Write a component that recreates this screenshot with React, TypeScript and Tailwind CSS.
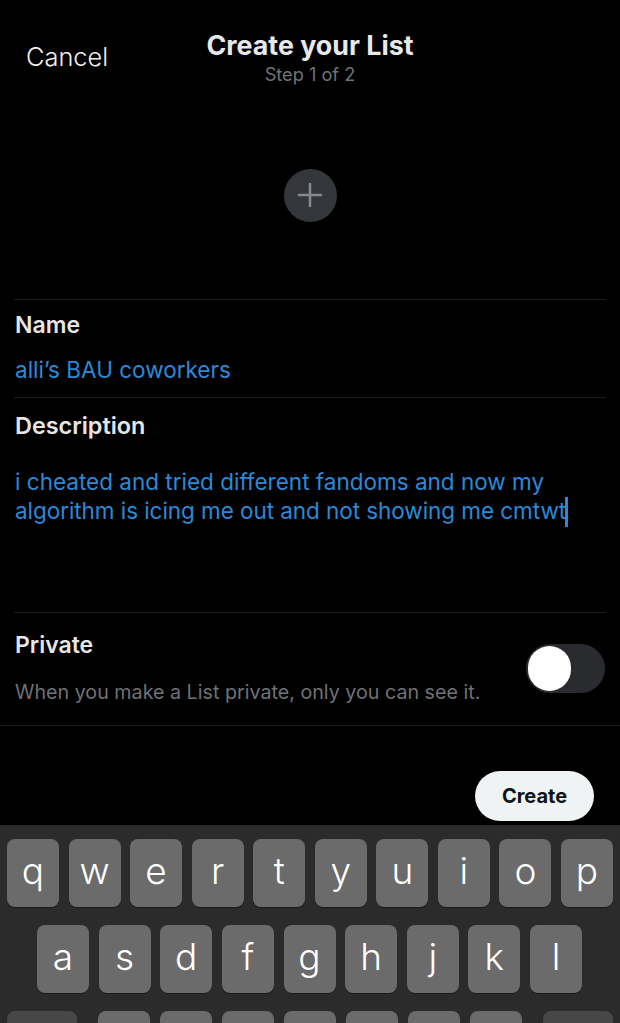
import React from 'react';
import { Plus } from 'lucide-react';

const rowOne = ['q', 'w', 'e', 'r', 't', 'y', 'u', 'i', 'o', 'p'];
const rowTwo = ['a', 's', 'd', 'f', 'g', 'h', 'j', 'k', 'l'];

function Key({ label }: { label?: string }) {
  return (
    <div className="w-[52px] h-[68px] shrink-0 rounded-[8px] bg-[#6b6b6b] shadow-[0_1px_0_#1a1a1a] flex items-center justify-center text-[37px] font-light leading-none text-white pb-[5px]">
      {label}
    </div>
  );
}

function Keyboard() {
  return (
    <div className="h-[198px] overflow-hidden bg-[#2b2b2b] pt-[14px] flex flex-col gap-[18px]">
      <div className="flex justify-between px-[7px]">
        {rowOne.map((k) => <Key key={k} label={k} />)}
      </div>
      <div className="flex justify-between pl-[37px] pr-[38px]">
        {rowTwo.map((k) => <Key key={k} label={k} />)}
      </div>
      {/* bottom row is cut off by the screen edge, only the key tops show */}
      <div className="flex justify-between px-[7px]">
        <div className="w-[70px] h-[68px] rounded-[8px] bg-[#474747]" />
        <div className="flex gap-[10px]">
          {[0, 1, 2, 3, 4, 5, 6].map((i) => <Key key={i} />)}
        </div>
        <div className="w-[70px] h-[68px] rounded-[8px] bg-[#474747]" />
      </div>
    </div>
  );
}

export default function App() {
  return (
    <div className="h-[1023px] w-[620px] overflow-hidden bg-black flex flex-col font-['Inter',sans-serif]">
      <div className="h-[169px] grid grid-cols-[1fr_auto_1fr] items-start">
        <div className="pl-[26px] pt-[41px] text-[25.4px] leading-[32px] font-light text-[#f0f0f0]">Cancel</div>
        <div className="pt-[28px] flex flex-col items-center">
          <div className="text-[26.8px] leading-[34px] font-bold text-[#e8e8e8]">Create your List</div>
          <div className="text-[18.2px] leading-[24px] text-[#6f7276]">Step 1 of 2</div>
        </div>
        <div />
      </div>

      <div className="h-[130px] flex justify-center">
        <div className="w-[53px] h-[53px] rounded-full bg-[#33363a] flex items-center justify-center">
          <Plus size={38} strokeWidth={1.6} color="#85888c" />
        </div>
      </div>

      <div className="mx-[14px] h-[99px] mt-[1px] border-t border-[#1c1c1c] border-b pt-[11px]">
        <div className="pl-[1px] text-[23px] leading-[28px] font-semibold text-[#e6e6e6]">Name</div>
        <div className="pl-[1px] mt-[16px] text-[22.5px] leading-[30px] text-[#2a8ad8]">alli’s BAU coworkers</div>
      </div>

      <div className="mx-[14px] h-[215px] border-b border-[#1c1c1c] pt-[14px]">
        <div className="pl-[1px] text-[23.4px] leading-[28px] font-semibold text-[#e6e6e6]">Description</div>
        <div className="pl-[1px] mt-[28px] text-[22.5px] leading-[28.5px] text-[#2a8ad8] whitespace-nowrap">
          i cheated and tried different fandoms and now my
          <br />
          <span className="tracking-[-0.06px]">algorithm is icing me out and not showing me cmtwt</span>
          <span className="inline-block w-[3px] h-[30px] bg-[#2a8ad8] align-[-8px] ml-[-1px]" />
        </div>
      </div>

      <div className="h-[113px] border-b border-[#1c1c1c] pl-[14px] pr-[15px] flex justify-between">
        <div className="pt-[18px] pl-[1px]">
          <div className="text-[23px] leading-[28px] font-semibold text-[#e6e6e6]">Private</div>
          <div className="mt-[19px] text-[19.7px] leading-[28px] text-[#6f7276] whitespace-nowrap">When you make a List private, only you can see it.</div>
        </div>
        <div className="mt-[31px] w-[79px] h-[49px] rounded-full bg-[#2a2b2e] p-[2px] shrink-0">
          <div className="w-[43px] h-[45px] rounded-full bg-white" />
        </div>
      </div>

      <div className="h-[100px] flex justify-end items-start pr-[26px] pt-[45px]">
        <div className="w-[119px] h-[50px] rounded-full bg-[#eff3f4] flex items-center justify-center text-[20px] font-bold text-[#0f1419]">Create</div>
      </div>

      <Keyboard />
    </div>
  );
}
